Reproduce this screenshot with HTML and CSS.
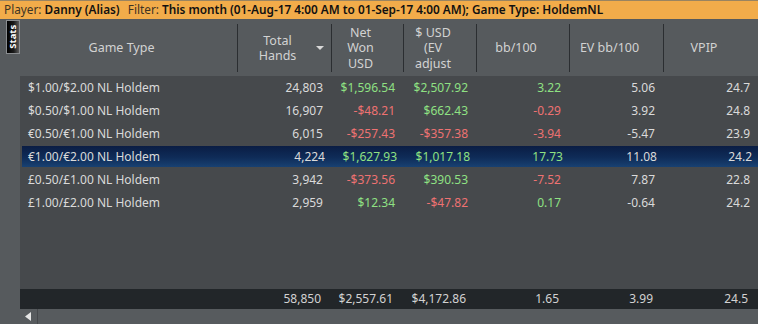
FILE: index.html
```html
<!DOCTYPE html>
<html lang="en">
<head>
    <meta charset="UTF-8">
    <title>Stats - Game Type</title>
    <link rel="stylesheet" href="styles.css">
</head>
<body>

    <div class="filter-bar">
        <span class="label">Player:</span> <b>Danny (Alias)</b>
        <span class="label gap">Filter:</span> <b>This month (01-Aug-17 4:00 AM to 01-Sep-17 4:00 AM); Game Type: HoldemNL</b>
    </div>

    <div class="main">
        <div class="side">
            <div class="stats-tab"><span>Stats</span></div>
        </div>

        <div class="grid">
            <div class="head">
                <div class="hcell"><span class="htext">Game Type</span><span class="sort"></span></div>
                <div class="hcell"><span class="htext">Total<br>Hands</span><span class="sort down"></span></div>
                <div class="hcell"><span class="htext">Net<br>Won<br>USD</span><span class="sort"></span></div>
                <div class="hcell"><span class="htext">$ USD<br>(EV<br>adjust</span><span class="sort"></span></div>
                <div class="hcell"><span class="htext">bb/100</span><span class="sort"></span></div>
                <div class="hcell"><span class="htext">EV bb/100</span><span class="sort"></span></div>
                <div class="hcell"><span class="htext">VPIP</span><span class="sort"></span></div>
            </div>

            <div class="rows">
                <div class="row">
                    <div class="c name">$1.00/$2.00 NL Holdem</div>
                    <div class="c">24,803</div>
                    <div class="c pos">$1,596.54</div>
                    <div class="c pos">$2,507.92</div>
                    <div class="c pos">3.22</div>
                    <div class="c">5.06</div>
                    <div class="c">24.7</div>
                </div>
                <div class="row">
                    <div class="c name">$0.50/$1.00 NL Holdem</div>
                    <div class="c">16,907</div>
                    <div class="c neg">-$48.21</div>
                    <div class="c pos">$662.43</div>
                    <div class="c neg">-0.29</div>
                    <div class="c">3.92</div>
                    <div class="c">24.8</div>
                </div>
                <div class="row">
                    <div class="c name">€0.50/€1.00 NL Holdem</div>
                    <div class="c">6,015</div>
                    <div class="c neg">-$257.43</div>
                    <div class="c neg">-$357.38</div>
                    <div class="c neg">-3.94</div>
                    <div class="c">-5.47</div>
                    <div class="c">23.9</div>
                </div>
                <div class="row selected">
                    <div class="c name">€1.00/€2.00 NL Holdem</div>
                    <div class="c">4,224</div>
                    <div class="c pos">$1,627.93</div>
                    <div class="c pos">$1,017.18</div>
                    <div class="c pos">17.73</div>
                    <div class="c">11.08</div>
                    <div class="c">24.2</div>
                </div>
                <div class="row">
                    <div class="c name">£0.50/£1.00 NL Holdem</div>
                    <div class="c">3,942</div>
                    <div class="c neg">-$373.56</div>
                    <div class="c pos">$390.53</div>
                    <div class="c neg">-7.52</div>
                    <div class="c">7.87</div>
                    <div class="c">22.8</div>
                </div>
                <div class="row">
                    <div class="c name">£1.00/£2.00 NL Holdem</div>
                    <div class="c">2,959</div>
                    <div class="c pos">$12.34</div>
                    <div class="c neg">-$47.82</div>
                    <div class="c pos">0.17</div>
                    <div class="c">-0.64</div>
                    <div class="c">24.2</div>
                </div>
            </div>

            <div class="totals">
                <div class="c"></div>
                <div class="c">58,850</div>
                <div class="c">$2,557.61</div>
                <div class="c">$4,172.86</div>
                <div class="c">1.65</div>
                <div class="c">3.99</div>
                <div class="c">24.5</div>
            </div>

            <div class="hscroll">
                <div class="scroll-btn">
                    <svg width="7" height="9" viewBox="0 0 7 9"><path d="M6 0 L6 9 L0 4.5 Z" fill="#e6e6e6"/></svg>
                </div>
                <div class="scroll-track"></div>
            </div>
        </div>
    </div>

</body>
</html>
```

FILE: styles.css
```css
body {
    margin: 0;
    width: 758px;
    height: 324px;
    overflow: hidden;
    font-family: "Noto Sans", "Open Sans", sans-serif;
    font-size: 12px;
    background-color: #565a5d;
    color: #d6d6d6;
}
.filter-bar {
    height: 19px;
    box-sizing: border-box;
    border-top: 1px solid #9a8460;
    background-color: #f2ac4a;
    padding-left: 4px;
    line-height: 17px;
    font-size: 11.8px;
    color: #111;
    white-space: nowrap;
}
.filter-bar .label {
    color: #3e3424;
}
.filter-bar .gap {
    margin-left: 5px;
}
.filter-bar b {
    font-weight: 600;
}

.main {
    display: flex;
    height: 305px;
}
.side {
    width: 20px;
    flex: none;
    padding-top: 1px;
}
.stats-tab {
    width: 12px;
    height: 32px;
    margin-left: 6px;
    border: 1px solid #8a8d90;
    background: linear-gradient(to right, #000 0%, #1a1a1a 55%, #5a5a5a 100%);
    display: flex;
    align-items: center;
    justify-content: center;
}
.stats-tab span {
    transform: rotate(-90deg);
    font-size: 9.5px;
    font-weight: bold;
    color: #fff;
    line-height: 1;
}

.grid {
    width: 738px;
    display: flex;
    flex-direction: column;
}
.head, .row, .totals {
    display: grid;
    grid-template-columns: 217px 94px 72px 73px 93px 94px 95px;
}
.head {
    height: 57px;
    box-sizing: border-box;
    padding: 5px 0 4px;
    font-size: 12.5px;
    color: #d2d2d2;
}
.hcell {
    display: flex;
    align-items: center;
    overflow: hidden;
}
.hcell + .hcell {
    border-left: 1px solid #2b2e31;
}
.htext {
    flex: 1;
    text-align: center;
    line-height: 15.5px;
    padding-left: 2px;
}
.sort {
    width: 16px;
    flex: none;
    display: flex;
    justify-content: center;
}
.sort.down::after {
    content: "";
    border-left: 4px solid transparent;
    border-right: 4px solid transparent;
    border-top: 4px solid #d8d8d8;
    margin-right: 6px;
}

.rows {
    flex: 1;
    background-color: #46494c;
}
.row {
    height: 23px;
    line-height: 21px;
    box-sizing: border-box;
    border-top: 1px solid transparent;
    border-bottom: 1px solid transparent;
}
.row.selected {
    background: linear-gradient(to bottom, #0a1d44 0%, #0f2c58 55%, #184172 100%);
    background-clip: padding-box;
    margin-left: 2px;
}
.row.selected .name {
    padding-left: 6px;
}
.c {
    text-align: right;
    padding-right: 8px;
    white-space: nowrap;
    color: #dadada;
}
.c.name {
    text-align: left;
    padding-left: 8px;
}
.c.pos {
    color: #8fe183;
}
.c.neg {
    color: #ee7272;
}

.totals {
    height: 20px;
    line-height: 20px;
    background-color: #222629;
}
.totals .c {
    padding-right: 10px;
    color: #d2d2d2;
}

.hscroll {
    height: 15px;
    display: flex;
    background-color: #575b5e;
}
.scroll-btn {
    width: 17px;
    border-right: 1px solid #45484b;
    display: flex;
    align-items: center;
    justify-content: center;
}
.scroll-track {
    flex: 1;
}
```
